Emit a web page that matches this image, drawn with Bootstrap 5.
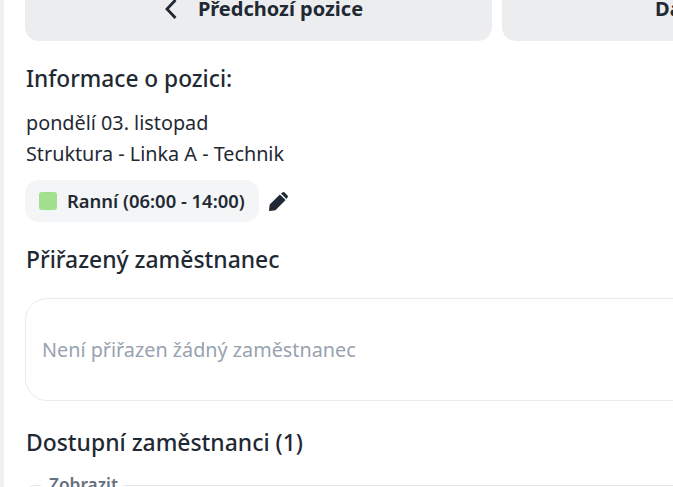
<!DOCTYPE html>
<html lang="cs">
<head>
  <meta charset="UTF-8">
  <title>Informace o pozici</title>
  <link href="https://cdn.jsdelivr.net/npm/bootstrap@5.3.0/dist/css/bootstrap.min.css" rel="stylesheet">
  <style>
    html, body { height: 487px; overflow: hidden; }
    body { font-family: "Noto Sans", sans-serif; color: #1f2933; background: #fff; }
    .page-wrap { width: 994px; height: 487px; overflow: hidden; border-left: 4px solid #eef0f4; padding: 0 25px 0 21px; }
    .nav-buttons { margin-top: -20px; gap: 10px; }
    .pos-btn { flex: 1 1 0; height: 61px; background: #ecedef; border-radius: 14px; font-size: 20px; font-weight: 700; color: #1f2933; padding-bottom: 3px; gap: 20px; line-height: 24px; }
    .pos-prev { padding-left: 10px; }
    .pos-next { padding-right: 10px; }
    .info-title { font-size: 22.7px; font-weight: 500; line-height: 28px; margin: 24px 0 14px; padding-left: 1px; }
    .info-line { font-size: 19.8px; line-height: 31px; padding-left: 1px; }
    .shift-row { margin-top: 11px; gap: 10px; }
    .shift-chip { height: 42px; background: #f3f5f7; border-radius: 14px; padding: 0 14px; gap: 10px; font-size: 18.4px; font-weight: 600; }
    .shift-dot { width: 18px; height: 18px; background: #a2e08e; border-radius: 3px; }
    .sect-title { font-size: 22.9px; font-weight: 500; line-height: 28px; padding-left: 1px; }
    .sect-first { margin-top: 24px; }
    .sect-second { margin-top: 28px; }
    .empty-box { height: 103px; margin-top: 24px; border: 1px solid #e9ebee; border-radius: 22px; padding-left: 16px; font-size: 19.8px; color: #98a2b0; }
    .show-box { margin-top: 28px; border: 1px solid #e3e5e8; border-radius: 10px; height: 40px; }
    .show-label { margin-left: 15px; padding: 0 6px 0 8px; background: #fff; font-size: 17.3px; font-weight: 600; color: #66707f; line-height: 20px; transform: translateY(-13px); display: inline-block; }
  </style>
</head>
<body>
  <div class="page-wrap">

    <!-- Previous / next -->
    <div class="d-flex nav-buttons">
      <div class="pos-btn pos-prev d-flex align-items-center justify-content-center">
        <svg width="14" height="22" viewBox="0 0 14 22"><path d="M11.5 2 L3 11 L11.5 20" fill="none" stroke="#1f2933" stroke-width="2.8"/></svg>
        <span>Předchozí pozice</span>
      </div>
      <div class="pos-btn pos-next d-flex align-items-center justify-content-center">
        <span>Další pozice</span>
        <svg width="14" height="22" viewBox="0 0 14 22"><path d="M2.5 2 L11 11 L2.5 20" fill="none" stroke="#1f2933" stroke-width="2.8"/></svg>
      </div>
    </div>

    <div class="info-title">Informace o pozici:</div>
    <div class="info-line">pondělí 03. listopad</div>
    <div class="info-line">Struktura - Linka A - Technik</div>

    <div class="d-flex align-items-center shift-row">
      <div class="shift-chip d-flex align-items-center">
        <span class="shift-dot"></span>
        <span>Ranní (06:00 - 14:00)</span>
      </div>
      <svg width="19" height="19" viewBox="0 0 19 19"><path d="M1 19 Q-0.1 19 0 18 L0.7 12.6 L10.9 2.4 L16.6 8.1 L6.4 18.3 Z M12 1.5 L13.4 0.5 Q14.6 -0.3 15.6 0.5 L18.5 3.4 Q19.3 4.4 18.5 5.6 L17.5 7 Z" fill="#1f2933"/></svg>
    </div>

    <div class="sect-title sect-first">Přiřazený zaměstnanec</div>
    <div class="empty-box d-flex align-items-center">Není přiřazen žádný zaměstnanec</div>

    <div class="sect-title sect-second">Dostupní zaměstnanci (1)</div>
    <div class="show-box"><span class="show-label">Zobrazit</span></div>

  </div>
</body>
</html>
